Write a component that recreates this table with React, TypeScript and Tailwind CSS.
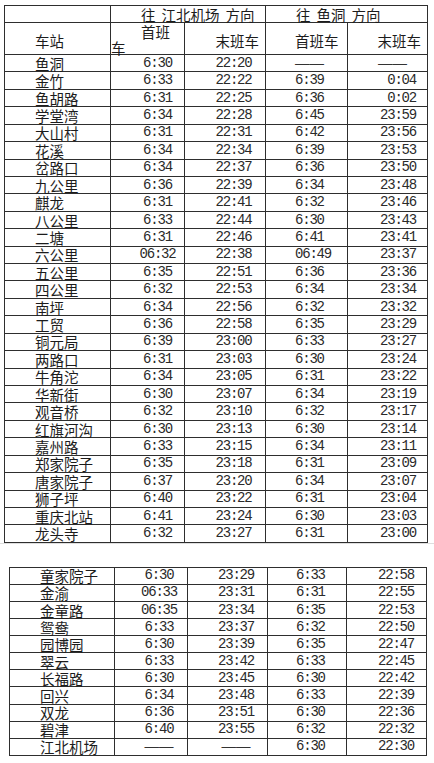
import React from "react";

type R = [string, string, string, string, string];

const T1: R[] = [
  ["鱼洞", "6:30", "22:20", "——", "——"],
  ["金竹", "6:33", "22:22", "6:39", "0:04"],
  ["鱼胡路", "6:31", "22:25", "6:36", "0:02"],
  ["学堂湾", "6:34", "22:28", "6:45", "23:59"],
  ["大山村", "6:31", "22:31", "6:42", "23:56"],
  ["花溪", "6:34", "22:34", "6:39", "23:53"],
  ["岔路口", "6:34", "22:37", "6:36", "23:50"],
  ["九公里", "6:36", "22:39", "6:34", "23:48"],
  ["麒龙", "6:31", "22:41", "6:32", "23:46"],
  ["八公里", "6:33", "22:44", "6:30", "23:43"],
  ["二塘", "6:31", "22:46", "6:41", "23:41"],
  ["六公里", "06:32", "22:38", "06:49", "23:37"],
  ["五公里", "6:35", "22:51", "6:36", "23:36"],
  ["四公里", "6:32", "22:53", "6:34", "23:34"],
  ["南坪", "6:34", "22:56", "6:32", "23:32"],
  ["工贸", "6:36", "22:58", "6:35", "23:29"],
  ["铜元局", "6:39", "23:00", "6:33", "23:27"],
  ["两路口", "6:31", "23:03", "6:30", "23:24"],
  ["牛角沱", "6:34", "23:05", "6:31", "23:22"],
  ["华新街", "6:30", "23:07", "6:34", "23:19"],
  ["观音桥", "6:32", "23:10", "6:32", "23:17"],
  ["红旗河沟", "6:30", "23:13", "6:30", "23:14"],
  ["嘉州路", "6:33", "23:15", "6:34", "23:11"],
  ["郑家院子", "6:35", "23:18", "6:31", "23:09"],
  ["唐家院子", "6:37", "23:20", "6:34", "23:07"],
  ["狮子坪", "6:40", "23:22", "6:31", "23:04"],
  ["重庆北站", "6:41", "23:24", "6:30", "23:03"],
  ["龙头寺", "6:32", "23:27", "6:31", "23:00"],
];

const T2: R[] = [
  ["童家院子", "6:30", "23:29", "6:33", "22:58"],
  ["金渝", "06:33", "23:31", "6:31", "22:55"],
  ["金童路", "06:35", "23:34", "6:35", "22:53"],
  ["鸳鸯", "6:33", "23:37", "6:32", "22:50"],
  ["园博园", "6:30", "23:39", "6:35", "22:47"],
  ["翠云", "6:33", "23:42", "6:33", "22:45"],
  ["长福路", "6:30", "23:45", "6:30", "22:42"],
  ["回兴", "6:34", "23:48", "6:33", "22:39"],
  ["双龙", "6:36", "23:51", "6:30", "22:36"],
  ["碧津", "6:40", "23:55", "6:32", "22:32"],
  ["江北机场", "——", "——", "6:30", "22:30"],
];

const cell =
  "flex items-center border-r border-b border-[#2e2e2e] whitespace-nowrap";
const cjk = "font-['Noto_Sans_CJK_SC',sans-serif] text-[14.5px] leading-[15px]";
const mono =
  "font-['Liberation_Mono',monospace] text-[14px] tracking-[-1.2px] leading-[15px] text-[#2a2a2a]";
const dashCls =
  "font-['Liberation_Sans',sans-serif] text-[14.5px] leading-[15px] text-[#333]";

function Val({ v }: { v: string }) {
  const dash = v === "——";
  return <span className={dash ? dashCls : mono}>{v}</span>;
}

type Pads = { c1: string; c2: string; c3: string; c4: string; c5: string; c5d: string };

const P1: Pads = {
  c1: "pl-[30px]",
  c2: "justify-center pl-[20px]",
  c3: "justify-center pl-[17px]",
  c4: "pl-[29px]",
  c5: "justify-end pr-[11px]",
  c5d: "justify-end pr-[20px]",
};

const P2: Pads = {
  c1: "pl-[30px]",
  c2: "justify-center pl-[16px]",
  c3: "justify-center pl-[17px]",
  c4: "pl-[28px]",
  c5: "justify-end pr-[12px]",
  c5d: "justify-end pr-[20px]",
};

function Rows({ data, p }: { data: R[]; p: Pads }) {
  return (
    <>
      {data.map((r) => (
        <React.Fragment key={r[0]}>
          <div className={`${cell} ${p.c1}`}>
            <span className={cjk}>{r[0]}</span>
          </div>
          <div className={`${cell} ${p.c2}`}>
            <Val v={r[1]} />
          </div>
          <div className={`${cell} ${p.c3}`}>
            <Val v={r[2]} />
          </div>
          <div className={`${cell} ${p.c4}`}>
            <Val v={r[3]} />
          </div>
          <div className={`${cell} ${r[4] === "——" ? p.c5d : p.c5}`}>
            <Val v={r[4]} />
          </div>
        </React.Fragment>
      ))}
    </>
  );
}

export default function App() {
  return (
    <div className="w-[434px] h-[763px] bg-white text-[#1c1c1c] overflow-hidden">
      <div className="pt-[5px] pl-[4px]">
        <div className="grid w-[424px] grid-cols-[106px_74px_81px_82px_80px] grid-rows-[17px_32px] auto-rows-[17.43px] border-l border-t border-[#2e2e2e]">
          {/* header row 1 */}
          <div className={cell}></div>
          <div className={`${cell} col-span-2 pl-[30px] gap-[6px] ${cjk}`}>
            <span>往</span>
            <span>江北机场</span>
            <span>方向</span>
          </div>
          <div className={`${cell} col-span-2 pl-[30px] gap-[6px] ${cjk}`}>
            <span>往</span>
            <span>鱼洞</span>
            <span>方向</span>
          </div>
          {/* header row 2 */}
          <div className={`${cell} pl-[30px] pt-[3px]`}>
            <span className={cjk}>车站</span>
          </div>
          <div className={`border-r border-b border-[#2e2e2e] whitespace-nowrap flex flex-col justify-center pt-[1px] ${cjk}`}>
            <div className="pl-[30px] h-[15px] leading-[15px]">首班</div>
            <div className="pl-[0px] h-[15px] leading-[15px] mt-[1px]">车</div>
          </div>
          <div className={`${cell} justify-end pr-[6px] pt-[3px]`}>
            <span className={cjk}>末班车</span>
          </div>
          <div className={`${cell} pl-[29px] pt-[3px]`}>
            <span className={cjk}>首班车</span>
          </div>
          <div className={`${cell} justify-end pr-[6px] pt-[3px]`}>
            <span className={cjk}>末班车</span>
          </div>
          <Rows data={T1} p={P1} />
        </div>
      </div>
      <div className="h-px bg-[#dedede]"></div>
      <div className="mt-[23px] ml-[9px]">
        <div className="grid w-[418px] grid-cols-[105px_73px_80px_79px_80px] auto-rows-[17.1px] border-l border-t border-[#2e2e2e]">
          <Rows data={T2} p={P2} />
        </div>
      </div>
    </div>
  );
}
